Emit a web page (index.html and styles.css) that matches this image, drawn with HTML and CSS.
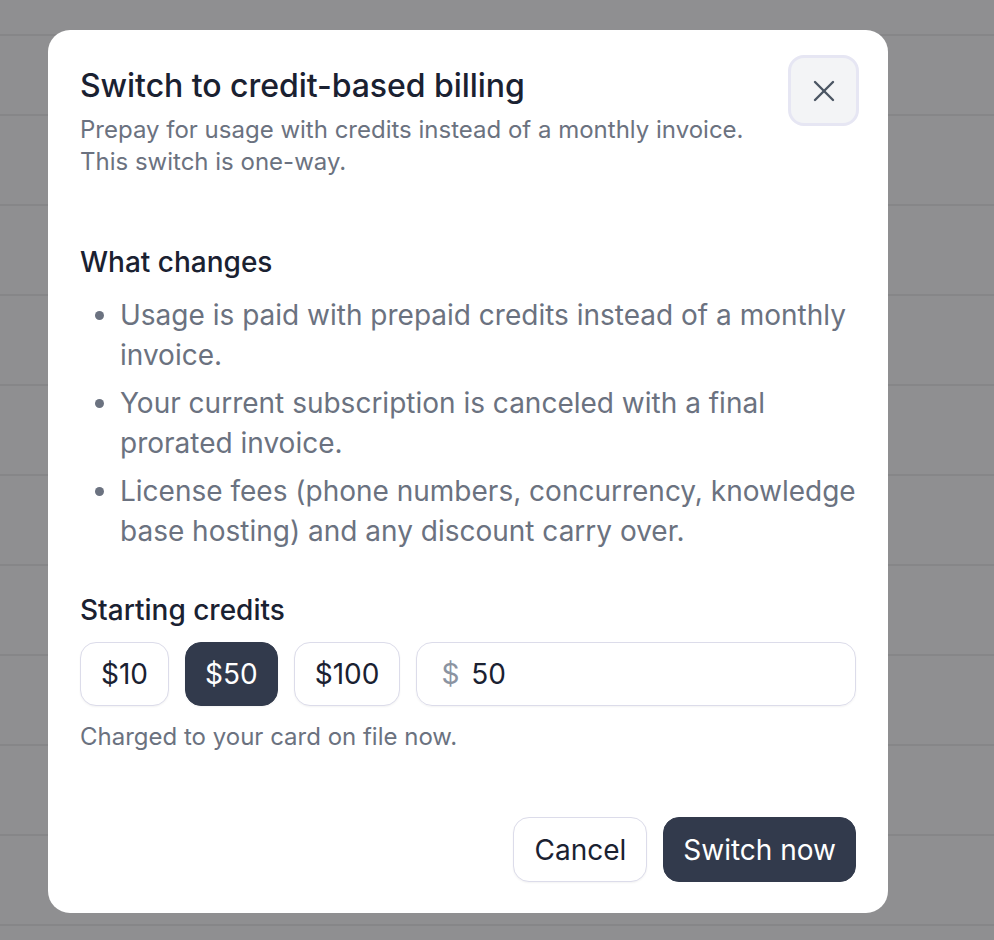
FILE: index.html
```html
<!DOCTYPE html>
<html lang="en">
<head>
<meta charset="utf-8">
<title>Switch to credit-based billing</title>
<link rel="stylesheet" href="styles.css">
</head>
<body>
<div class="backdrop">
  <div class="bg-row bg-row-first"></div>
  <div class="bg-row bg-row-second"></div>
  <div class="bg-row"></div>
  <div class="bg-row"></div>
  <div class="bg-row"></div>
  <div class="bg-row"></div>
  <div class="bg-row"></div>
  <div class="bg-row"></div>
  <div class="bg-row"></div>
  <div class="bg-row"></div>
  <div class="bg-row"></div>
</div>

<div class="modal" role="dialog" aria-labelledby="modal-title">
  <div class="modal-header">
    <div class="header-text">
      <h2 id="modal-title" class="modal-title">Switch to credit-based billing</h2>
      <p class="modal-desc">Prepay for usage with credits instead of a monthly invoice.<br>This switch is one-way.</p>
    </div>
    <button class="close-btn" aria-label="Close">
      <svg width="22" height="22" viewBox="0 0 22 22" fill="none" stroke="currentColor" stroke-width="2.4" stroke-linecap="round"><path d="M2 2 20 20"/><path d="M20 2 2 20"/></svg>
    </button>
  </div>

  <section class="section changes">
    <h3 class="section-title">What changes</h3>
    <ul class="change-list">
      <li>Usage is paid with prepaid credits instead of a monthly invoice.</li>
      <li>Your current subscription is canceled with a final prorated invoice.</li>
      <li>License fees (phone numbers, concurrency, knowledge base hosting) and any discount carry over.</li>
    </ul>
  </section>

  <section class="section credits">
    <h3 class="section-title">Starting credits</h3>
    <div class="credit-row">
      <button class="chip">$10</button>
      <button class="chip chip-active">$50</button>
      <button class="chip">$100</button>
      <label class="amount-input">
        <span class="currency">$</span>
        <span class="amount-value">50</span>
      </label>
    </div>
    <p class="hint">Charged to your card on file now.</p>
  </section>

  <div class="modal-footer">
    <button class="btn btn-outline">Cancel</button>
    <button class="btn btn-dark">Switch now</button>
  </div>
</div>
</body>
</html>
```

FILE: styles.css
```css
* { box-sizing: border-box; }

html, body {
  margin: 0;
  padding: 0;
}

body {
  width: 994px;
  height: 940px;
  overflow: hidden;
  position: relative;
  background: #8f8f91;
  font-family: "Inter", "Noto Sans", "Liberation Sans", sans-serif;
}

.backdrop {
  display: flex;
  flex-direction: column;
}

.bg-row {
  height: 90px;
  border-bottom: 2px solid #868688;
  flex-shrink: 0;
}

.bg-row-first { height: 36px; }
.bg-row-second { height: 80px; }

.modal {
  position: absolute;
  left: 48px;
  top: 30px;
  width: 840px;
  height: 883px;
  background: #ffffff;
  border-radius: 22px;
  padding: 36px 32px 31px 32px;
  display: flex;
  flex-direction: column;
}

.modal-header {
  display: flex;
  justify-content: space-between;
  align-items: flex-start;
}

.modal-title {
  margin: 0;
  font-size: 32px;
  line-height: 40px;
  font-weight: 500;
  color: #1a2131;
  letter-spacing: -0.05px;
}

.modal-desc {
  margin: 8px 0 0 0;
  font-size: 24px;
  line-height: 32px;
  color: #6b7280;
}

.close-btn {
  width: 71px;
  height: 71px;
  margin: -11px -3px 0 0;
  border: 3px solid #e6e6f3;
  border-radius: 16px;
  background: #f3f4f6;
  color: #4b5563;
  display: flex;
  align-items: center;
  justify-content: center;
  padding: 0;
}

.close-btn svg {
  width: 22px;
  height: 22px;
  overflow: visible;
}

.section-title {
  margin: 0;
  font-size: 28px;
  line-height: 40px;
  font-weight: 500;
  color: #1a2131;
}

.changes {
  margin-top: 64px;
}

.change-list {
  margin: 13px 0 0 0;
  padding-left: 40px;
  color: #6b7280;
  font-size: 28px;
  line-height: 40px;
}

.change-list li {
  margin-bottom: 8px;
}

.change-list li::marker {
  color: #6b7280;
}

.credits {
  margin-top: 31px;
}

.credit-row {
  display: flex;
  gap: 16px;
  margin-top: 12px;
}

.chip {
  height: 64px;
  padding: 0 20px;
  border: 1px solid #dcdcea;
  border-radius: 16px;
  background: #ffffff;
  font-family: inherit;
  font-size: 28px;
  color: #1a2131;
  box-shadow: 0 1px 2px rgba(0, 0, 0, 0.05);
}

.chip-active {
  background: #323a4c;
  border-color: #323a4c;
  color: #ffffff;
  padding: 0 19px;
}

.amount-input {
  flex: 1;
  height: 64px;
  border: 1px solid #dcdcea;
  border-radius: 16px;
  display: flex;
  align-items: center;
  padding: 0 24px;
  gap: 12px;
  font-size: 28px;
  box-shadow: 0 1px 2px rgba(0, 0, 0, 0.05);
}

.currency {
  color: #8b93a1;
}

.amount-value {
  color: #1a2131;
}

.hint {
  margin: 15px 0 0 0;
  font-size: 24px;
  line-height: 32px;
  color: #6b7280;
}

.modal-footer {
  margin-top: auto;
  display: flex;
  justify-content: flex-end;
  gap: 16px;
}

.btn {
  height: 65px;
  padding: 0 20px;
  border-radius: 16px;
  font-family: inherit;
  font-size: 28px;
}

.btn-outline {
  background: #ffffff;
  border: 1px solid #dcdcea;
  color: #1a2131;
  box-shadow: 0 1px 2px rgba(0, 0, 0, 0.05);
}

.btn-dark {
  background: #323a4c;
  border: 1px solid #323a4c;
  color: #ffffff;
  padding: 0 19px;
}
```
